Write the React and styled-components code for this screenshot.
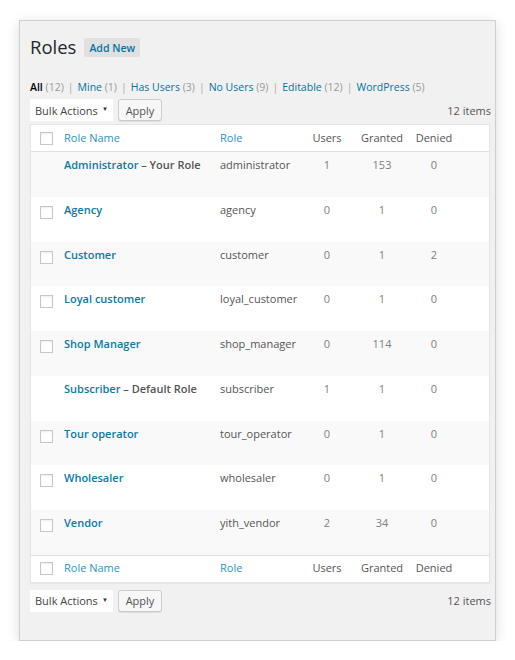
import React from "react";
import styled, { createGlobalStyle } from "styled-components";

const Global = createGlobalStyle`
  html, body { margin: 0; padding: 0; background: #fff; }
  body { font-family: "Open Sans", "Noto Sans", sans-serif; color: #444; }
  * { box-sizing: border-box; }
`;

const Panel = styled.div`
  margin: 20px 0 0 19px;
  width: 477px;
  height: 621px;
  background: #f1f1f1;
  border: 1px solid #cfcfcf;
  box-shadow: 0 3px 12px rgba(0, 0, 0, 0.14);
  padding: 12px 4px 0 10px;
  display: flex;
  flex-direction: column;
`;

const TitleRow = styled.div`
  display: flex;
  align-items: center;
  gap: 8px;
  height: 28px;
`;

const Title = styled.h1`
  margin: 0;
  font-size: 18.5px;
  font-weight: 400;
  color: #23282d;
  line-height: 28px;
`;

const AddNew = styled.span`
  display: inline-flex;
  align-items: center;
  height: 19px;
  padding: 0 5px;
  background: #e0e0e0;
  color: #0074a2;
  font-size: 10.5px;
  font-weight: 600;
  border-radius: 2px;
  margin-top: 1px;
`;

const Filters = styled.div`
  margin-top: 18px;
  font-size: 10.5px;
  line-height: 16px;
  color: #666;
  white-space: nowrap;
`;

const FilterLink = styled.span`
  color: ${(p) => (p.$current ? "#000" : "#0074a2")};
  font-weight: ${(p) => (p.$current ? 600 : 400)};
`;

const Count = styled.span`
  color: #999;
`;

const Sep = styled.span`
  color: #aaa;
  margin: 0 4px;
`;

const TableNav = styled.div`
  display: flex;
  align-items: center;
  gap: 5px;
  height: 24px;
  margin-top: ${(p) => p.$mt}px;
`;

const Select = styled.div`
  width: 83px;
  height: 22px;
  background: #fff;
  display: flex;
  align-items: center;
  justify-content: space-between;
  padding: 0 5px;
  font-size: 11px;
  color: #444;
`;

const Arrow = styled.span`
  font-size: 6px;
  color: #333;
  margin-top: -2px;
`;

const Button = styled.div`
  width: 44px;
  height: 22px;
  background: #f7f7f7;
  border: 1px solid #ccc;
  border-radius: 3px;
  box-shadow: 0 1px 0 #ddd;
  display: flex;
  align-items: center;
  justify-content: center;
  font-size: 11px;
  color: #555;
`;

const Items = styled.div`
  margin-left: auto;
  font-size: 11px;
  color: #555;
`;

const Table = styled.div`
  margin-top: 2px;
  width: 460px;
  background: #fff;
  border: 1px solid #e5e5e5;
  box-shadow: 0 1px 1px rgba(0, 0, 0, 0.04);
`;

const cols = "25px 156px 89px 52px 58px 46px 1fr";

const HeadRow = styled.div`
  display: grid;
  grid-template-columns: ${cols};
  align-items: center;
  height: 27px;
  padding-bottom: 2px;
  font-size: 11px;
  color: #555;
  border-${(p) => (p.$foot ? "top" : "bottom")}: 1px solid #e1e1e1;
`;

const Row = styled.div`
  display: grid;
  grid-template-columns: ${cols};
  align-items: start;
  height: 44.75px;
  background: ${(p) => (p.$alt ? "#f9f9f9" : "#fff")};
  font-size: 11px;
  color: #555;
`;

const CbCell = styled.div`
  padding-left: 9px;
  padding-top: ${(p) => (p.$head ? 2 : 9)}px;
  display: flex;
  align-items: center;
`;

const Checkbox = styled.span`
  display: block;
  width: 13px;
  height: 13px;
  border: 1px solid #c4c8cc;
  background: #fff;
  box-shadow: inset 0 1px 2px rgba(0, 0, 0, 0.07);
`;

const Cell = styled.div`
  padding: ${(p) => (p.$head ? "0 0 0 8px" : "5px 0 0 8px")};
  line-height: 15px;
  white-space: nowrap;
`;

const NumCell = styled.div`
  padding-top: ${(p) => (p.$head ? 0 : 5)}px;
  line-height: 15px;
  text-align: center;
  color: ${(p) => (p.$head ? "#555" : "#808080")};
`;

const NameLink = styled.span`
  color: #0b7aa3;
  font-weight: 600;
`;

const NameNote = styled.span`
  color: #555;
  font-weight: 600;
`;

const HeadLink = styled.span`
  color: #2a95c2;
`;

const roles = [
  { name: "Administrator", note: "Your Role", slug: "administrator", users: 1, granted: 153, denied: 0, cb: false },
  { name: "Agency", slug: "agency", users: 0, granted: 1, denied: 0, cb: true },
  { name: "Customer", slug: "customer", users: 0, granted: 1, denied: 2, cb: true },
  { name: "Loyal customer", slug: "loyal_customer", users: 0, granted: 1, denied: 0, cb: true },
  { name: "Shop Manager", slug: "shop_manager", users: 0, granted: 114, denied: 0, cb: true },
  { name: "Subscriber", note: "Default Role", slug: "subscriber", users: 1, granted: 1, denied: 0, cb: false },
  { name: "Tour operator", slug: "tour_operator", users: 0, granted: 1, denied: 0, cb: true },
  { name: "Wholesaler", slug: "wholesaler", users: 0, granted: 1, denied: 0, cb: true },
  { name: "Vendor", slug: "yith_vendor", users: 2, granted: 34, denied: 0, cb: true },
];

const filters = [
  ["All", 12],
  ["Mine", 1],
  ["Has Users", 3],
  ["No Users", 9],
  ["Editable", 12],
  ["WordPress", 5],
];

function Header({ foot }) {
  return (
    <HeadRow $foot={foot}>
      <CbCell $head>
        <Checkbox />
      </CbCell>
      <Cell $head>
        <HeadLink>Role Name</HeadLink>
      </Cell>
      <Cell $head>
        <HeadLink>Role</HeadLink>
      </Cell>
      <NumCell $head>Users</NumCell>
      <NumCell $head>Granted</NumCell>
      <NumCell $head>Denied</NumCell>
      <div />
    </HeadRow>
  );
}

function Nav({ mt }) {
  return (
    <TableNav $mt={mt}>
      <Select>
        Bulk Actions <Arrow>▼</Arrow>
      </Select>
      <Button>Apply</Button>
      <Items>12 items</Items>
    </TableNav>
  );
}

export default function App() {
  return (
    <>
      <Global />
      <Panel>
        <TitleRow>
          <Title>Roles</Title>
          <AddNew>Add New</AddNew>
        </TitleRow>
        <Filters>
          {filters.map(([label, n], i) => (
            <React.Fragment key={label}>
              {i > 0 && <Sep>|</Sep>}
              <FilterLink $current={i === 0}>{label}</FilterLink> <Count>({n})</Count>
            </React.Fragment>
          ))}
        </Filters>
        <Nav mt={3} />
        <Table>
          <Header />
          {roles.map((r, i) => (
            <Row key={r.slug} $alt={i % 2 === 0}>
              <CbCell>{r.cb && <Checkbox />}</CbCell>
              <Cell>
                <NameLink>{r.name}</NameLink>
                {r.note && <NameNote> – {r.note}</NameNote>}
              </Cell>
              <Cell>{r.slug}</Cell>
              <NumCell>{r.users}</NumCell>
              <NumCell>{r.granted}</NumCell>
              <NumCell>{r.denied}</NumCell>
              <div />
            </Row>
          ))}
          <Header foot />
        </Table>
        <Nav mt={6} />
      </Panel>
    </>
  );
}
